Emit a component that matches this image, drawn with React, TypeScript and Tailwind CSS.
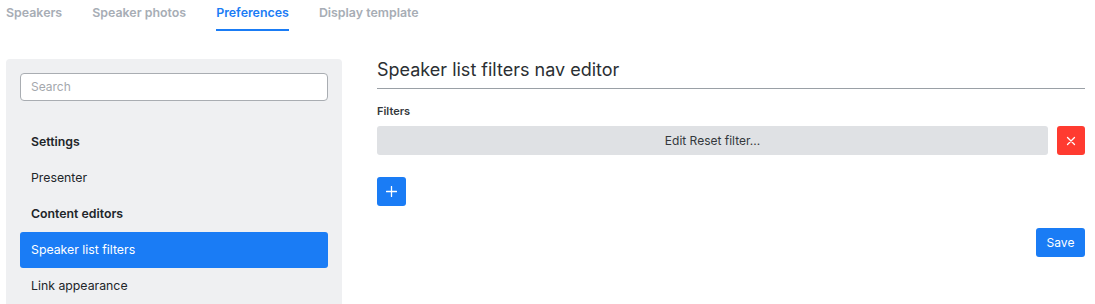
import React from "react";

const tabs = ["Speakers", "Speaker photos", "Preferences", "Display template"];

export default function App() {
  return (
    <div className="w-[1095px] h-[304px] overflow-hidden bg-white text-[#212529]" style={{ fontFamily: "Inter, 'Noto Sans', sans-serif" }}>
      {/* tabs */}
      <div className="flex h-[31px] pl-[6px] gap-[30px]">
        {tabs.map((t) => (
          <div
            key={t}
            className={
              t === "Preferences"
                ? "h-full flex items-start pt-[4px] text-[12.4px] font-semibold text-[#1a7cf5] border-b-2 border-[#1a7cf5]"
                : "h-full flex items-start pt-[4px] text-[12.4px] font-semibold text-[#a7adb5]"
            }
          >
            {t}
          </div>
        ))}
      </div>

      <div className="flex mt-[28px] pl-[6px] pr-[10px] gap-[35px]">
        {/* sidebar */}
        <div className="w-[336px] h-[260px] bg-[#eff0f2] rounded-t-[4px] px-[14px] pt-[14px]">
          <div className="h-[28px] rounded-[4px] border border-[#a9adb2] bg-white flex items-center px-[10px] text-[12px] text-[#a4a8ad]">
            Search
          </div>
          <div className="mt-[23px] flex flex-col">
            <div className="h-[36px] flex items-center px-[11px] text-[12.3px] font-semibold">Settings</div>
            <div className="h-[36px] flex items-center px-[11px] text-[12.3px]">Presenter</div>
            <div className="h-[36px] flex items-center px-[11px] text-[12.3px] font-semibold">Content editors</div>
            <div className="h-[36px] flex items-center px-[11px] text-[12.3px] text-white bg-[#1a7cf5] rounded-[3px]">
              Speaker list filters
            </div>
            <div className="h-[36px] flex items-center px-[11px] text-[12.3px]">Link appearance</div>
          </div>
        </div>

        {/* editor */}
        <div className="flex-1 flex flex-col">
          <div className="h-[30px] leading-[22px] text-[18px] text-[#2b2f33] border-b border-[#9aa0a6]">
            Speaker list filters nav editor
          </div>
          <div className="mt-[14px] leading-[16px] text-[11px] font-semibold text-[#34383c]">Filters</div>
          <div className="mt-[7px] flex gap-[9px]">
            <div className="flex-1 h-[29px] rounded-[3px] bg-[#dfe1e4] flex items-center justify-center text-[12px] text-[#34383c]">
              Edit Reset filter...
            </div>
            <div className="w-[28px] h-[29px] rounded-[3px] bg-[#ff3b30] flex items-center justify-center">
              <svg width="10" height="10" viewBox="0 0 10 10" stroke="white" strokeWidth="1.3" strokeLinecap="round">
                <path d="M1.5 1.5 L8.5 8.5 M8.5 1.5 L1.5 8.5" />
              </svg>
            </div>
          </div>
          <div className="mt-[22px] w-[29px] h-[29px] rounded-[3px] bg-[#1a7cf5] flex items-center justify-center">
            <svg width="11" height="11" viewBox="0 0 11 11" stroke="white" strokeWidth="1.3" strokeLinecap="round">
              <path d="M5.5 0.5 V10.5 M0.5 5.5 H10.5" />
            </svg>
          </div>
          <div className="mt-[22px] flex justify-end">
            <div className="w-[49px] h-[29px] rounded-[3px] bg-[#1a7cf5] flex items-center justify-center text-[12px] text-white">
              Save
            </div>
          </div>
        </div>
      </div>
    </div>
  );
}
